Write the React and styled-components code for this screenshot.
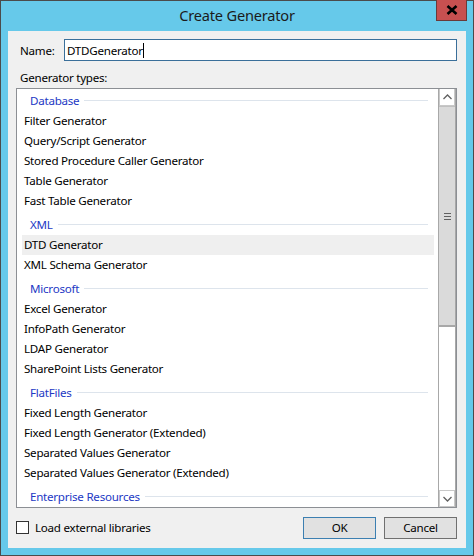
import React from 'react';
import styled, { createGlobalStyle } from 'styled-components';

const GlobalStyle = createGlobalStyle`
  html, body { margin: 0; padding: 0; background: #fff; }
  body { font-family: "Noto Sans", "Open Sans", sans-serif; }
`;

const groups = [
  { name: 'Database', items: ['Filter Generator', 'Query/Script Generator', 'Stored Procedure Caller Generator', 'Table Generator', 'Fast Table Generator'] },
  { name: 'XML', items: ['DTD Generator', 'XML Schema Generator'] },
  { name: 'Microsoft', items: ['Excel Generator', 'InfoPath Generator', 'LDAP Generator', 'SharePoint Lists Generator'] },
  { name: 'FlatFiles', items: ['Fixed Length Generator', 'Fixed Length Generator (Extended)', 'Separated Values Generator', 'Separated Values Generator (Extended)'] },
  { name: 'Enterprise Resources', items: [] },
];

const App = () => {
  return (
    <>
      <GlobalStyle />
      <Window>
        <TitleBar>
          <Title>Create Generator</Title>
          <CloseButton>
            <svg width="12" height="10" viewBox="0 0 12 10">
              <path d="M1.5 1 L10.5 9 M10.5 1 L1.5 9" stroke="#000" strokeWidth="2.6" />
            </svg>
          </CloseButton>
        </TitleBar>
        <Content>
          <NameRow>
            <Label>Name:</Label>
            <NameInput>
              DTDGenerator<Caret />
            </NameInput>
          </NameRow>
          <TypesLabel>Generator types:</TypesLabel>
          <ListBox>
            <Items>
              {groups.map((g, gi) => (
                <React.Fragment key={g.name}>
                  <GroupHeader first={gi === 0}>
                    <span>{g.name}</span>
                    <HeaderLine />
                  </GroupHeader>
                  {g.items.map((it) => (
                    <Item key={it} selected={it === 'DTD Generator'}>{it}</Item>
                  ))}
                </React.Fragment>
              ))}
            </Items>
            <ScrollBar>
              <ArrowButton>
                <svg width="9" height="6" viewBox="0 0 9 6">
                  <path d="M0.5 5 L4.5 1 L8.5 5" stroke="#606060" strokeWidth="1.3" fill="none" />
                </svg>
              </ArrowButton>
              <Track>
                <Thumb>
                  <Grip><i /><i /><i /></Grip>
                </Thumb>
              </Track>
              <ArrowButton bottom>
                <svg width="9" height="6" viewBox="0 0 9 6">
                  <path d="M0.5 1 L4.5 5 L8.5 1" stroke="#606060" strokeWidth="1.3" fill="none" />
                </svg>
              </ArrowButton>
            </ScrollBar>
          </ListBox>
          <Footer>
            <CheckRow>
              <CheckBox />
              <span>Load external libraries</span>
            </CheckRow>
            <Buttons>
              <Button primary>OK</Button>
              <Button>Cancel</Button>
            </Buttons>
          </Footer>
        </Content>
      </Window>
    </>
  );
};

export default App;

const Window = styled.div`
  width: 474px;
  height: 556px;
  box-sizing: border-box;
  border: 1px solid #4b4b4b;
  background: #66c9ea;
  display: flex;
  flex-direction: column;
  font-size: 11.6px;
  letter-spacing: -0.25px;
  color: #000;
`;

const TitleBar = styled.div`
  height: 30px;
  flex: none;
  position: relative;
  display: flex;
  align-items: center;
  justify-content: center;
`;

const Title = styled.div`
  font-size: 14.6px;
  letter-spacing: -0.2px;
  color: #1b1b1b;
  margin-top: -2px;
`;

const CloseButton = styled.div`
  position: absolute;
  top: -1px;
  right: 6px;
  width: 31px;
  height: 21px;
  box-sizing: border-box;
  background: #c75050;
  border: 1px solid #6a3a3a;
  border-top: none;
  display: flex;
  align-items: center;
  justify-content: center;
`;

const Content = styled.div`
  flex: 1;
  margin: 0 7px 7px 7px;
  background: #f0f0f0;
  padding: 8px 9px 0 8px;
  display: flex;
  flex-direction: column;
`;

const NameRow = styled.div`
  display: flex;
  align-items: center;
  padding-left: 4px;
  height: 22px;
`;

const Label = styled.div`
  width: 44px;
  flex: none;
`;

const NameInput = styled.div`
  flex: 1;
  height: 22px;
  box-sizing: border-box;
  border: 1px solid #3a6f9a;
  background: #fff;
  display: flex;
  align-items: center;
  padding-left: 2px;
`;

const Caret = styled.span`
  display: inline-block;
  width: 1px;
  height: 15px;
  background: #000;
`;

const TypesLabel = styled.div`
  margin: 9px 0 2px 4px;
  height: 16px;
  line-height: 16px;
`;

const ListBox = styled.div`
  height: 420px;
  flex: none;
  box-sizing: border-box;
  border: 1px solid #8c8f94;
  background: #fff;
  display: flex;
  overflow: hidden;
`;

const Items = styled.div`
  flex: 1;
  overflow: hidden;
  display: flex;
  flex-direction: column;
`;

const GroupHeader = styled.div`
  height: 22px;
  flex: none;
  margin-top: ${(p) => (p.first ? '0' : '2px')};
  display: flex;
  align-items: center;
  padding: 0 10px 0 13px;
  color: #2338c4;
  span { white-space: nowrap; }
`;

const HeaderLine = styled.div`
  flex: 1;
  height: 1px;
  background: #dde4ec;
  margin-left: 5px;
`;

const Item = styled.div`
  height: 20px;
  flex: none;
  line-height: 20px;
  margin: 0 4px 0 5px;
  padding-left: 2px;
  white-space: nowrap;
  background: ${(p) => (p.selected ? '#efefef' : 'transparent')};
`;

const ScrollBar = styled.div`
  width: 18px;
  flex: none;
  box-sizing: border-box;
  display: flex;
  flex-direction: column;
  border-left: 1px solid #a8a8a8;
  border-right: 1px solid #a8a8a8;
`;

const ArrowButton = styled.div`
  height: 17px;
  flex: none;
  box-sizing: border-box;
  border: 1px solid #c8c8c8;
  border-top: ${(p) => (p.bottom ? '1px solid #c8c8c8' : 'none')};
  background: #fff;
  display: flex;
  align-items: center;
  justify-content: center;
`;

const Track = styled.div`
  flex: 1;
  background: #fff;
  display: flex;
  flex-direction: column;
`;

const Thumb = styled.div`
  height: 221px;
  box-sizing: border-box;
  background: #dadada;
  border-bottom: 2px solid #a8a8a8;
  border-top: 1px solid #c0c0c0;
  display: flex;
  align-items: center;
  justify-content: center;
`;

const Grip = styled.div`
  display: flex;
  flex-direction: column;
  gap: 2px;
  i {
    display: block;
    width: 7px;
    height: 1px;
    background: #606060;
  }
`;

const Footer = styled.div`
  flex: 1;
  display: flex;
  align-items: center;
  justify-content: space-between;
  padding-bottom: 1px;
`;

const CheckRow = styled.div`
  display: flex;
  align-items: center;
  gap: 6px;
`;

const CheckBox = styled.div`
  width: 13px;
  height: 13px;
  box-sizing: border-box;
  border: 1px solid #333;
  background: #fff;
`;

const Buttons = styled.div`
  display: flex;
  gap: 8px;
`;

const Button = styled.div`
  width: 73px;
  height: 22px;
  box-sizing: border-box;
  border: 1px solid ${(p) => (p.primary ? '#3c7fb1' : '#707070')};
  background: #e1e1e1;
  display: flex;
  align-items: center;
  justify-content: center;
`;
